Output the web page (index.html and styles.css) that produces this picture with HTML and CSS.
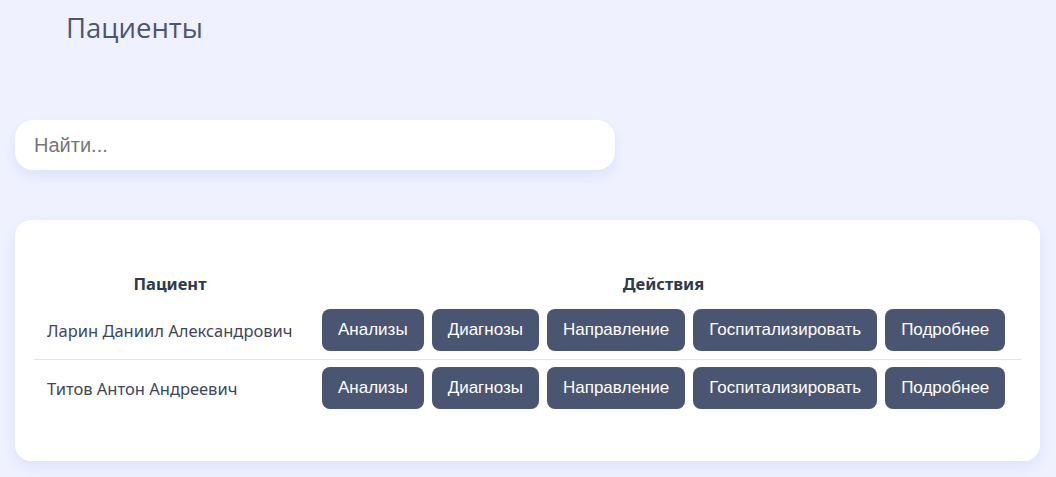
FILE: index.html
```html
<!DOCTYPE html>
<html lang="ru">
<head>
<meta charset="utf-8">
<title>Пациенты</title>
<link rel="stylesheet" href="styles.css">
</head>
<body>
<div class="page">
  <h1 class="title">Пациенты</h1>
  <div class="search">
    <input class="search-input" type="text" placeholder="Найти...">
  </div>
  <div class="card">
    <table class="table">
      <thead>
        <tr>
          <th class="col-name">Пациент</th>
          <th>Действия</th>
        </tr>
      </thead>
      <tbody>
        <tr class="row">
          <td class="name">Ларин Даниил Александрович</td>
          <td class="actions">
            <div class="btns">
              <button class="btn">Анализы</button>
              <button class="btn">Диагнозы</button>
              <button class="btn">Направление</button>
              <button class="btn">Госпитализировать</button>
              <button class="btn">Подробнее</button>
            </div>
          </td>
        </tr>
        <tr class="row-last">
          <td class="name">Титов Антон Андреевич</td>
          <td class="actions">
            <div class="btns">
              <button class="btn">Анализы</button>
              <button class="btn">Диагнозы</button>
              <button class="btn">Направление</button>
              <button class="btn">Госпитализировать</button>
              <button class="btn">Подробнее</button>
            </div>
          </td>
        </tr>
      </tbody>
    </table>
  </div>
</div>
</body>
</html>
```

FILE: styles.css
```css
html, body {
  margin: 0;
  padding: 0;
  background: #eff2fe;
}
body {
  font-family: "Noto Sans", "Open Sans", sans-serif;
  color: #3d4759;
}
.page {
  padding: 0 16px 16px 15px;
}
.title {
  margin: 0;
  padding: 10px 0 0 51px;
  height: 110px;
  box-sizing: border-box;
  font-family: "Open Sans", "Noto Sans", sans-serif;
  font-weight: 400;
  font-size: 27.5px;
  line-height: 36px;
  color: #4b5575;
}
.search {
  width: 600px;
  margin-top: 10px;
}
.search-input {
  display: block;
  width: 100%;
  height: 50px;
  box-sizing: border-box;
  border: none;
  outline: none;
  border-radius: 18px;
  background: #ffffff;
  padding: 0 19px;
  font-family: "Liberation Sans", Arial, sans-serif;
  font-size: 20px;
  color: #333;
  box-shadow: 0 6px 14px rgba(110, 130, 230, 0.14);
}
.search-input::placeholder {
  color: #767676;
}
.card {
  margin-top: 50px;
  width: 1025px;
  box-sizing: border-box;
  background: #ffffff;
  border-radius: 16px;
  padding: 46px 19px 44px 19px;
  box-shadow: 0 6px 16px rgba(110, 130, 230, 0.14);
}
.table {
  width: 100%;
  border-collapse: collapse;
}
.table th {
  font-weight: 700;
  font-size: 16.5px;
  line-height: 20px;
  padding: 8px 12px 7px;
  text-align: center;
  color: #2f3a4b;
}
.col-name {
  width: 248px;
}
.table td {
  padding: 8px 12px;
  vertical-align: middle;
}
.row td {
  border-bottom: 1px solid #e2e4e8;
}
.row-last td {
  padding-top: 7px;
  padding-bottom: 8px;
}
.name {
  font-size: 16.5px;
  padding-left: 13px !important;
  color: #3d4759;
  white-space: nowrap;
}
.actions {
  padding-left: 16px !important;
}
.btns {
  display: flex;
  gap: 8px;
}
.btn {
  height: 42px;
  padding: 0 16px;
  border: none;
  border-radius: 8px;
  background: #4a5572;
  color: #ffffff;
  font-family: "Liberation Sans", Arial, sans-serif;
  font-size: 17px;
  white-space: nowrap;
  cursor: pointer;
}
```
